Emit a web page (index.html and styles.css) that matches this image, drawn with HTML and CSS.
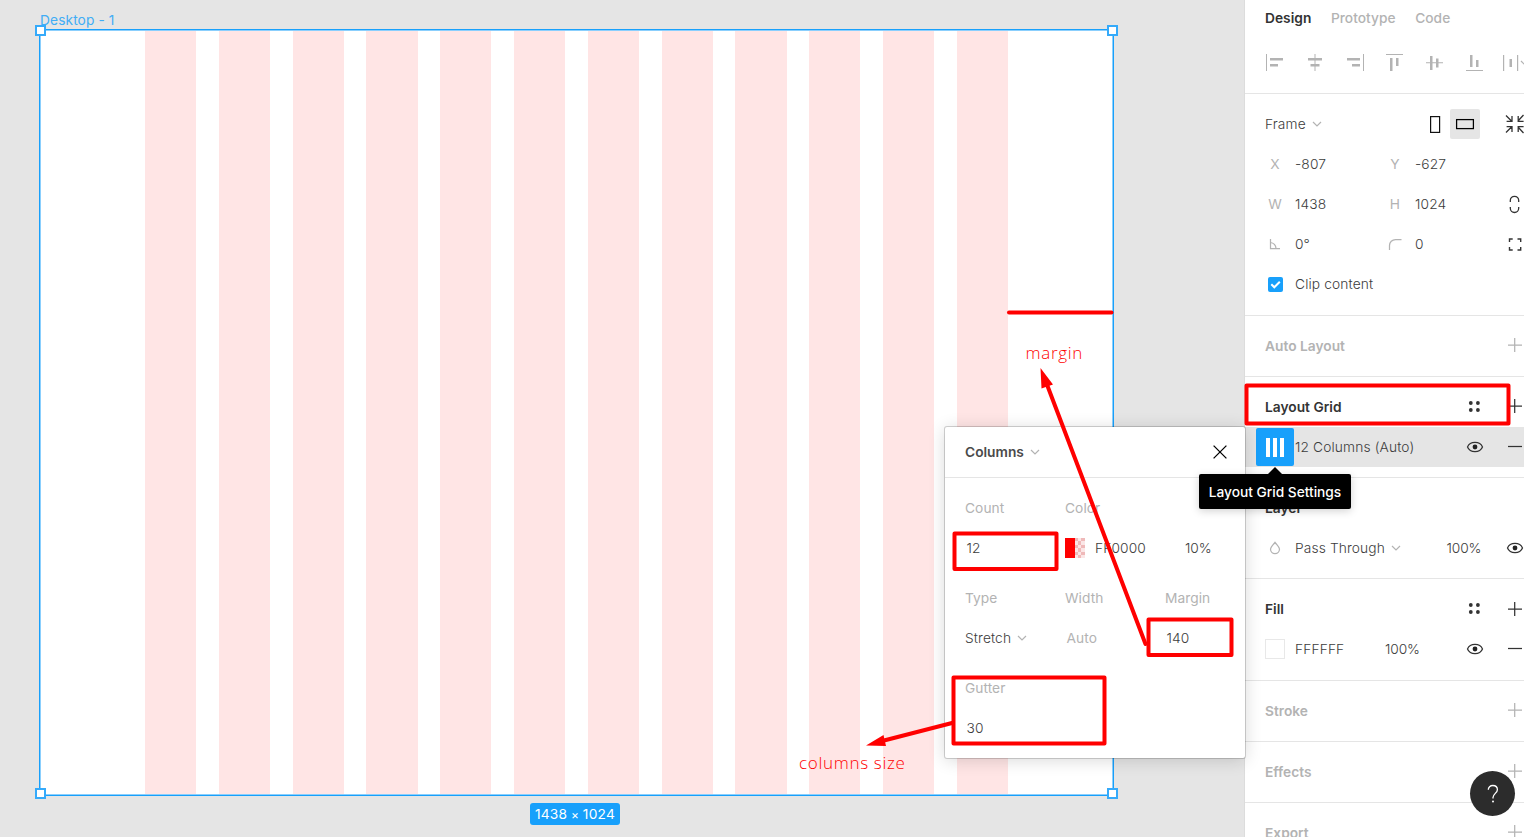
FILE: index.html
```
<!DOCTYPE html>
<html lang="en">
<head>
<meta charset="utf-8">
<title>Desktop - 1</title>
<link rel="stylesheet" href="styles.css">
</head>
<body>
<svg width="0" height="0" class="defs">
  <defs>
    <symbol id="chev" viewBox="0 0 10 10"><path d="M1 3l4 4 4-4" fill="none" stroke="#b3b3b3" stroke-width="1.2"/></symbol>
    <symbol id="plus" viewBox="0 0 40 40"><path d="M13 19h14M19.700 12v14" fill="none" stroke="currentColor" stroke-width="1.25"/></symbol>
    <symbol id="minus" viewBox="0 0 40 40"><path d="M13 19.500h14" fill="none" stroke="currentColor" stroke-width="1.25"/></symbol>
    <symbol id="dots" viewBox="0 0 40 40"><g fill="#333"><circle cx="15.8" cy="16" r="1.900"/><circle cx="22.9" cy="16" r="1.900"/><circle cx="15.8" cy="23" r="1.900"/><circle cx="22.9" cy="23" r="1.900"/></g></symbol>
    <symbol id="eye" viewBox="0 0 40 40"><path d="M12.5 20c1.2-2.9 4.1-4.6 7.5-4.6s6.300 1.700 7.500 4.600c-1.200 2.900-4.100 4.600-7.500 4.600s-6.300-1.700-7.500-4.600z" fill="none" stroke="#333" stroke-width="1.25"/><circle cx="20" cy="20" r="2.400" fill="#222"/></symbol>
  </defs>
</svg>
<div class="app">
  <main class="canvas">
    <div class="frame">
      <div class="frame-name">Desktop - 1</div>
      <div class="grid"><i></i><i></i><i></i><i></i><i></i><i></i><i></i><i></i><i></i><i></i><i></i><i></i></div>
      <b class="handle tl"></b><b class="handle tr"></b><b class="handle bl"></b><b class="handle br"></b>
      <div class="size">1438 <small>×</small> 1024</div>
    </div>
  </main>

  <aside class="panel">
    <nav class="tabs"><span class="active">Design</span><span>Prototype</span><span>Code</span></nav>
    <div class="row align">
      <svg><path d="M11 11h1v17h-1zM15 15h13v2.500h-13zM15 21h8v2.500h-8z"/></svg>
      <svg><path d="M19.500 11h1v17h-1zM13 15h14v2.500h-14zM15.500 21h9v2.500h-9z"/></svg>
      <svg><path d="M28 11h1v17h-1zM12 15h13v2.500h-13zM17 21h8v2.500h-8z"/></svg>
      <svg><path d="M11 11h17v1h-17zM15 15h2.500v13h-2.500zM21 15h2.500v8h-2.500z"/></svg>
      <svg><path d="M11 19.200h17v1h-17zM15 13h2.500v14h-2.500zM21 15.500h2.500v9h-2.500z"/></svg>
      <svg><path d="M11 27h17v1h-17zM15 12h2.500v12h-2.500zM21 17h2.500v7h-2.500z"/></svg>
      <svg><path d="M8 12h1.200v16h-1.200zM14.500 16h2.500v8h-2.500zM22 12h1.200v16h-1.200z"/><path d="M26 18l4 4 4-4" class="stroke"/></svg>
    </div>

    <section class="frame-props">
      <div class="row">
        <span class="head plain">Frame <svg class="chev"><use href="#chev"/></svg></span>
        <span class="orient">
          <span><svg viewBox="0 0 30 30"><rect x="10.600" y="7.600" width="9" height="15.800" fill="none" stroke="#111" stroke-width="1.200"/></svg></span>
          <span class="on"><svg viewBox="0 0 30 30"><rect x="6.600" y="10.600" width="16.800" height="9" fill="none" stroke="#000" stroke-width="1.250"/></svg></span>
        </span>
        <svg class="c7"><path d="M11 11.500l5.500 5.500M17 12v5.400h-5.400M28.500 11l-5.500 6M23.200 12v5.400h5.400M11 28.500l5.500-5.500M17 28v-5.400h-5.400M28.500 29l-5.500-6M23.200 28v-5.400h5.400" class="dark"/></svg>
      </div>
      <div class="row">
        <span class="key">X</span><span class="val">-807</span><span class="key k2">Y</span><span class="val v2">-627</span>
      </div>
      <div class="row">
        <span class="key">W</span><span class="val">1438</span><span class="key k2">H</span><span class="val v2">1024</span>
        <svg class="c7"><path d="M15.300 18v-1.500a4.200 4.200 0 0 1 8.400 0v1.500M15.300 23v1.300a4.200 4.200 0 0 0 8.400 0v-1.300" class="dark"/></svg>
      </div>
      <div class="row">
        <svg class="c1"><path d="M15.500 15v9.500h9.500M15.500 18.500a6 6 0 0 1 5.500 6" class="light"/></svg>
        <span class="val">0°</span>
        <svg class="c4"><path d="M14.500 26v-4.500a6 6 0 0 1 6-6h6" class="light"/></svg>
        <span class="val v2">0</span>
        <svg class="c7"><path d="M14.500 18v-3h3.200M22.500 15h3.200v3M25.700 23v3h-3.200M17.700 26h-3.200v-3" class="dark thick"/></svg>
      </div>
      <div class="row">
        <svg class="c1"><rect x="13" y="13" width="15" height="15" rx="2" fill="#18a0fb"/><path d="M16.300 20.300l3 3 5.500-5.500" fill="none" stroke="#fff" stroke-width="2"/></svg>
        <span class="val wide">Clip content</span>
      </div>
    </section>

    <section class="empty">
      <div class="row"><span class="head">Auto Layout</span><svg class="c7"><use href="#plus"/></svg></div>
    </section>

    <section>
      <div class="row"><span class="head">Layout Grid</span><svg class="c6"><use href="#dots"/></svg><svg class="c7"><use href="#plus"/></svg></div>
      <div class="row selected">
        <span class="grid-btn"><i></i><i></i><i></i></span>
        <span class="val wide">12 Columns (Auto)</span>
        <svg class="c6"><use href="#eye"/></svg><svg class="c7"><use href="#minus"/></svg>
      </div>
    </section>

    <section>
      <div class="row"><span class="head">Layer</span></div>
      <div class="row">
        <svg class="c1"><path d="M20 14.300c-2.200 3-4.500 4.500-4.500 6.800a4.500 4.500 0 0 0 9 0c0-2.300-2.300-3.800-4.500-6.800z" class="light"/></svg>
        <span class="val wide">Pass Through <svg class="chev"><use href="#chev"/></svg></span>
        <span class="pct p5">100%</span>
        <svg class="c7"><use href="#eye"/></svg>
      </div>
    </section>

    <section class="fill">
      <div class="row"><span class="head">Fill</span><svg class="c6"><use href="#dots"/></svg><svg class="c7 low"><use href="#plus"/></svg></div>
      <div class="row">
        <span class="swatch"></span>
        <span class="val hex">FFFFFF</span>
        <span class="pct p4">100%</span>
        <svg class="c6"><use href="#eye"/></svg><svg class="c7"><use href="#minus"/></svg>
      </div>
    </section>

    <section class="empty"><div class="row"><span class="head">Stroke</span><svg class="c7"><use href="#plus"/></svg></div></section>
    <section class="empty"><div class="row"><span class="head">Effects</span><svg class="c7"><use href="#plus"/></svg></div></section>
    <section class="empty"><div class="row"><span class="head">Export</span><svg class="c7"><use href="#plus"/></svg></div></section>
  </aside>

  <div class="popover">
    <header><span>Columns</span><svg class="chev"><use href="#chev"/></svg>
      <svg class="close" viewBox="0 0 14 14"><path d="M.6.6l12.800 12.800M13.400.6l-12.800 12.800" stroke="#000" stroke-width="1.300"/></svg></header>
    <div class="fields">
      <div class="group">
        <label>Count</label><label>Color</label><label></label>
        <span class="inset">12</span>
        <span class="color"><svg width="20" height="20"><rect width="20" height="20" fill="#fbe6e6"/><path d="M10 0h3v3h-3zM16 0h4v3h-4zM13 3h3v4h-3zM10 7h3v3h-3zM16 7h4v3h-4zM13 10h3v4h-3zM10 14h3v3h-3zM16 14h4v3h-4zM13 17h3v3h-3z" fill="#efb9b9"/><rect width="10" height="20" fill="#f00"/></svg>FF0000</span>
        <span class="opacity">10%</span>
      </div>
      <div class="group">
        <label>Type</label><label>Width</label><label>Margin</label>
        <span>Stretch <svg class="chev"><use href="#chev"/></svg></span><span class="inset muted">Auto</span><span class="inset">140</span>
      </div>
      <div class="group">
        <label>Gutter</label><label></label><label></label>
        <span class="inset">30</span>
      </div>
    </div>
  </div>

  <svg class="notes" viewBox="0 0 1524 837">
    <g fill="none" stroke="#f00" stroke-width="4" stroke-linejoin="round" stroke-linecap="round">
      <path d="M1009 312.500h102.500"/>
      <rect x="1246.500" y="385.500" width="262" height="38"/>
      <rect x="954.500" y="533.500" width="102" height="35.500"/>
      <rect x="1148.500" y="619.500" width="83" height="35.500"/>
      <rect x="953.500" y="677.500" width="151" height="66"/>
      <path d="M1145.500 644L1046 382"/>
      <path d="M952 723L884 740.500"/>
    </g>
    <path d="M1040.500 368L1053 384.500 1041.500 388.500zM866 745.500L883.500 735 886 746z" fill="#f00"/>
    <text x="1025.500" y="359" textLength="57">margin</text>
    <text x="799" y="769" textLength="106">columns size</text>
  </svg>

  <div class="tooltip">Layout Grid Settings</div>
  <div class="help"><svg viewBox="0 0 45 45"><path d="M18.300 18.800c0-2.600 1.900-4.300 4.500-4.300s4.600 1.700 4.600 4.200c0 3.500-4.400 3.900-4.400 7.800v1" fill="none" stroke="#fff" stroke-width="1.300"/><circle cx="23" cy="30.500" r="1" fill="#fff"/></svg></div>
</div>
</body>
</html>
```
FILE: styles.css
```
* { box-sizing: border-box; }
body {
  margin: 0;
  font: 400 13.75px/20px Inter, "Open Sans", sans-serif;
  font-weight: 350;
  letter-spacing: 0.13px;
  color: #3c3c3c;
  overflow: hidden;
}
.defs { position: absolute; }
.app { position: relative; display: flex; width: 1524px; height: 837px; overflow: hidden; }

/* Canvas */
.canvas { flex: 1; background: #e5e5e5; padding: 29px 0 0 39px; }
.frame {
  position: relative;
  width: 1075px;
  height: 767px;
  padding: 0 105px;
  border: 1px solid #18a0fb;
  box-shadow: inset 0 0 0 1px rgba(24, 160, 251, .5);
  background: #fff;
}
.grid { display: flex; gap: 22.500px; height: 100%; padding: 1px 0; }
.grid i { flex: 1; background: #ffe5e5; }
.frame-name { position: absolute; left: 0; top: -20px; color: #41adf5; font-weight: 400; letter-spacing: .1px; }
.handle { position: absolute; width: 11px; height: 11px; background: #fff; border: 2px solid #35aafa; }
.tl { left: -5px; top: -5px; }
.tr { right: -5px; top: -5px; }
.bl { left: -5px; bottom: -4px; }
.br { right: -5px; bottom: -4px; }
.size {
  position: absolute; left: 490px; top: 773px; width: 90px; height: 22px;
  background: #18a0fb; color: #fff; border-radius: 3px; font-weight: 400; letter-spacing: .25px;
  text-align: center; line-height: 22px; white-space: nowrap;
}
.size small { font-size: 12px; margin: 0 -.5px; }

/* Properties panel */
.panel { width: 280px; border-left: 1px solid #dcdcdc; background: #fff; overflow: hidden; }
.tabs { display: flex; gap: 19.500px; height: 36px; padding-left: 20px; align-items: center; font-weight: 500; letter-spacing: .03px; color: #b3b3b3; }
.tabs .active { font-weight: 600; color: #333; }
.row {
  display: grid;
  grid-template-columns: repeat(7, 40px);
  grid-template-rows: 40px;
  align-items: center;
  width: 290px;
  padding-left: 10px;
}
.row > * { grid-row: 1; }
.row > svg { width: 40px; height: 40px; color: #333; }
.row > .low { margin-top: 1px; }
.align { height: 57px; padding-top: 7px; }
.align svg { fill: #b3b3b3; }
.stroke { fill: none; stroke: #b3b3b3; stroke-width: 1.200; }
.light { fill: none; stroke: #b3b3b3; stroke-width: 1.250; }
.dark { fill: none; stroke: #333; stroke-width: 1.300; }
.thick { stroke-width: 1.400; }
.panel section { border-top: 1px solid #e5e5e5; padding: 10px 0; }
.panel .frame-props, .panel .fill { padding-bottom: 11px; }
.head { grid-column: 1 / 5; margin-left: 10px; font-weight: 600; letter-spacing: 0; color: #333; white-space: nowrap; }
.head.plain { font-weight: 350; letter-spacing: .13px; color: #3c3c3c; }
.empty .head { color: #b3b3b3; }
.empty .row > svg { color: #b3b3b3; }
.chev { width: 10px; height: 10px; margin-left: 2px; }
.key { grid-column: 1; text-align: center; color: #b3b3b3; font-weight: 400; }
.k2, .c4 { grid-column: 4; }
.val { grid-column: 2 / 4; white-space: nowrap; }
.v2 { grid-column: 5 / 7; }
.wide { grid-column: 2 / 6; }
.c1 { grid-column: 1; }
.c6 { grid-column: 6; }
.c7 { grid-column: 7; }
.pct { white-space: nowrap; letter-spacing: -.1px; }
.p4 { grid-column: 4 / 6; margin-left: 10px; }
.p5 { grid-column: 5 / 7; margin-left: 31.500px; }
.orient { grid-column: 5 / 7; display: flex; padding-left: 5px; }
.orient span { width: 30px; height: 30px; border-radius: 2px; }
.orient svg { display: block; width: 30px; height: 30px; }
.orient .on { background: #e5e5e5; }
.selected { background: #e5e5e5; }
.grid-btn {
  display: flex; justify-content: center; align-items: center; gap: 3px;
  width: 38px; height: 38px; margin-left: 1px; border-radius: 2px; background: #18a0fb;
}
.grid-btn i { width: 4px; height: 19px; background: #fff; }
.swatch { width: 20px; height: 20px; margin-left: 10px; border: 1px solid #e8e8e8; }

/* Grid settings popover */
.popover {
  position: absolute; left: 945px; top: 427px; width: 300px; height: 331px;
  background: #fff; border-radius: 2px;
  box-shadow: 0 0 0 1px rgba(0, 0, 0, .17), 0 2px 17px rgba(0, 0, 0, .16);
}
.popover header {
  display: flex; align-items: center; height: 51px; padding: 0 18px 0 20px;
  border-bottom: 1px solid #e5e5e5; font-weight: 600; color: #4a4a4a; letter-spacing: 0;
}
.popover header .chev { margin-left: 6px; }
.close { width: 14px; height: 14px; margin-left: auto; }
.fields { display: flex; flex-direction: column; gap: 10px; padding: 10px 0 10px 20px; }
.group { display: grid; grid-template-columns: 100px 100px 80px; grid-template-rows: 40px 40px; align-items: center; white-space: nowrap; }
.group label, .group .muted { color: #b3b3b3; font-weight: 400; letter-spacing: .05px; }
.inset { padding-left: 1.500px; }
.color { display: flex; align-items: center; gap: 10px; }
.opacity { padding-left: 20px; letter-spacing: -.1px; }

/* Hand-drawn notes */
.notes { position: absolute; left: 0; top: 0; width: 1524px; height: 837px; pointer-events: none; }
.notes text { fill: #f00; font: 400 17px "Open Sans", "Noto Sans", sans-serif; font-weight: 350; }

.tooltip {
  position: absolute; left: 1199px; top: 474px; width: 152px; height: 35px;
  background: #000; color: #fff; border-radius: 2px; font-weight: 500; letter-spacing: -.02px;
  line-height: 36px; text-align: center; white-space: nowrap;
  box-shadow: 0 2px 8px rgba(0, 0, 0, .18);
}
.tooltip::before {
  content: ""; position: absolute; left: 69px; top: -7px;
  border: solid transparent; border-width: 0 7.500px 7px; border-bottom-color: #000;
}
.help { position: absolute; left: 1470px; top: 771px; width: 45px; height: 45px; border-radius: 50%; background: #2c2c2c; }
.help svg { display: block; }
```
